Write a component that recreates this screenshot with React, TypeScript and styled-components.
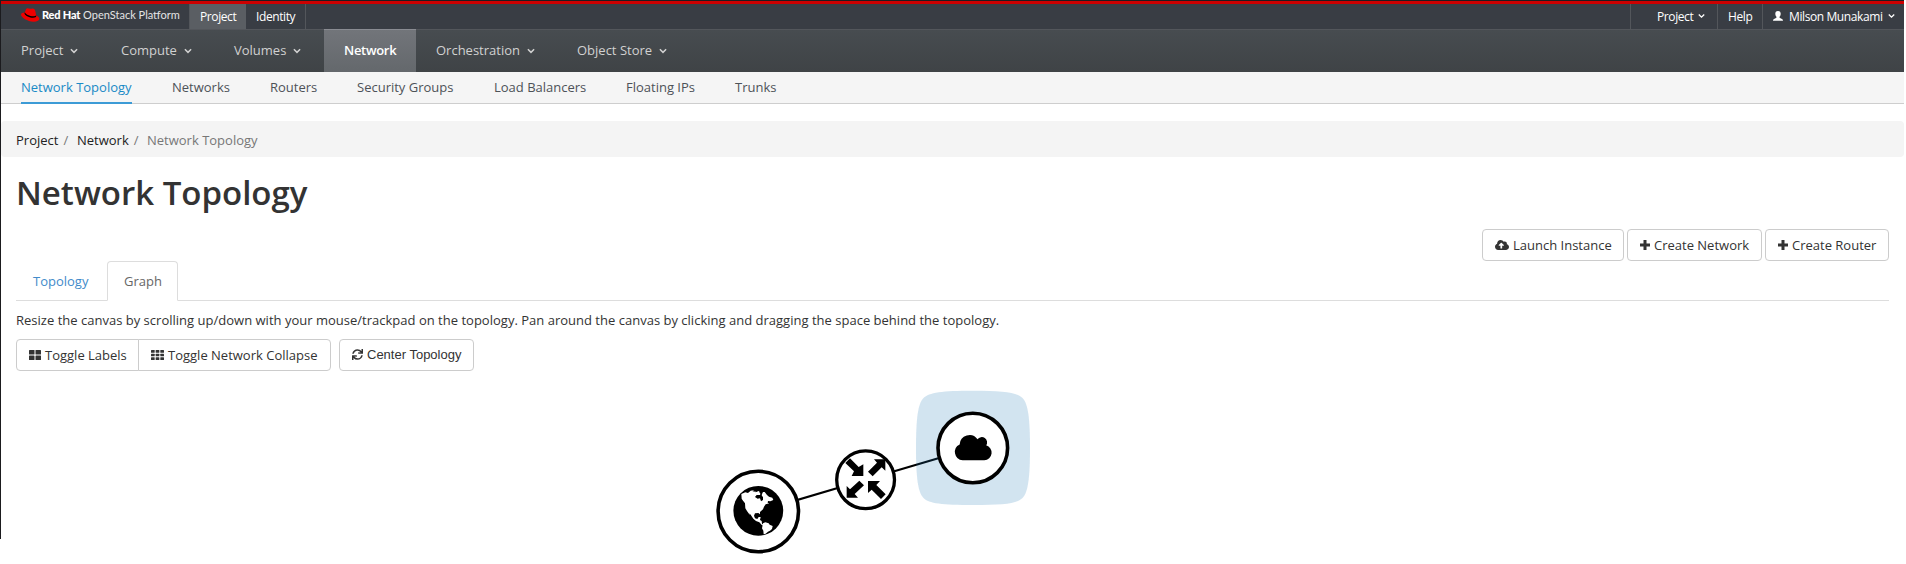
import React from 'react';
import styled, { createGlobalStyle, css } from 'styled-components';
import { FaCloudUploadAlt, FaSync } from 'react-icons/fa';

const Global = createGlobalStyle`
  * { box-sizing: border-box; }
  html { background: #fff; overflow: hidden; }
  body { margin: 0; font: 13px/20px "Open Sans", "Noto Sans", sans-serif; color: #333; }
`;

const Page = styled.div`
  width: 1904px;
  height: 564px;
  overflow: hidden;
  background: linear-gradient(#1b1b1e, #1b1b1e) 0 0 / 1px 539px no-repeat, #fff;
  padding-left: 1px;
`;

const Masthead = styled.header`
  height: 29px;
  border-top: 1px solid #1d1d1f;
  box-shadow: inset 0 3px 0 #c00;
  background: #393d44;
  padding-top: 3px;
  display: flex;
  color: #fff;
  font-size: 12px;
  letter-spacing: -0.4px;
  line-height: 25px;
`;

const Brand = styled.div`
  width: 188px;
  height: 25px;
  padding-left: 20px;
  display: flex;
  white-space: nowrap;
  svg { flex: none; margin-top: 4px; }
`;

const BrandName = styled.span`
  font: 400 11px/22px Lato, sans-serif;
  letter-spacing: 0;
  color: #e4e4e4;
  margin-left: 2px;
  b { font-weight: 900; color: #fff; letter-spacing: -0.2px; }
`;

const MastItem = styled.div<{ $w: number; $active?: boolean; $pad?: number; $left?: boolean }>`
  width: ${p => p.$w}px;
  padding-left: ${p => p.$pad ?? 10}px;
  display: flex;
  white-space: nowrap;
  border-right: ${p => (p.$left ? 0 : 1)}px solid #53565b;
  border-left: ${p => (p.$left ? 1 : 0)}px solid #53565b;
  background: ${p => (p.$active ? '#5a5e63' : 'transparent')};
`;

const Spacer = styled.div`flex: 1;`;

const PrimaryNav = styled.nav`
  height: 43px;
  border-top: 1px solid #53565b;
  background: linear-gradient(#474c50, #3f4346);
  display: flex;
`;

const PrimaryItem = styled.div<{ $w: number; $active?: boolean }>`
  width: ${p => p.$w}px;
  height: 43px;
  margin-top: -1px;
  padding: 1px 0 0 20px;
  line-height: 41px;
  display: flex;
  white-space: nowrap;
  color: #d1d1d1;
  ${p => p.$active && css`
    color: #fff;
    font-weight: 600;
    letter-spacing: -0.3px;
    border-top: 1px solid #8a8c92;
    padding-top: 0;
    background: linear-gradient(#72757a, #64686c);
  `}
`;

const SubNav = styled.nav`
  height: 32px;
  background: #f5f5f5;
  border-bottom: 1px solid #cecece;
  padding-left: 20px;
  display: flex;
  gap: 40px;
`;

const SubItem = styled.div<{ $active?: boolean; $w: number }>`
  width: ${p => p.$w}px;
  height: 32px;
  white-space: nowrap;
  line-height: 31px;
  color: ${p => (p.$active ? '#1a8ac6' : '#4d5258')};
  border-bottom: ${p => (p.$active ? '2px solid #3c9bd6' : '0')};
`;

const Crumbs = styled.div`
  margin-top: 17px;
  height: 36px;
  padding-left: 15px;
  border-radius: 4px;
  background: #f4f4f4;
  line-height: 39px;
  white-space: pre;
  display: flex;
`;

const Crumb = styled.span<{ $w?: number; $muted?: boolean }>`
  width: ${p => (p.$w ? p.$w + 'px' : 'auto')};
  color: ${p => (p.$muted ? '#777' : '#222')};
  i { font-style: normal; color: #777; margin-left: 5px; }
`;

const Content = styled.main`padding: 0 15px 0 15px;`;

const Title = styled.h1`
  margin: 15px 0 0;
  height: 57px;
  font-size: 33px;
  line-height: 42px;
  font-weight: 600;
  color: #333;
`;

const Row = styled.div<{ $end?: boolean; $gap?: number }>`
  display: flex;
  justify-content: ${p => (p.$end ? 'flex-end' : 'flex-start')};
  gap: ${p => p.$gap ?? 0}px;
`;

const Button = styled.button<{ $w: number; $side?: 'left' | 'right'; $plain?: boolean }>`
  width: ${p => p.$w}px;
  height: 32px;
  padding: 0 0 ${p => (p.$plain ? 2 : 0)}px 12px;
  display: flex;
  align-items: center;
  gap: 4px;
  border: 1px solid #ccc;
  border-radius: ${p => (p.$side === 'left' ? '4px 0 0 4px' : p.$side === 'right' ? '0 4px 4px 0' : '4px')};
  margin-left: ${p => (p.$side === 'right' ? -1 : 0)}px;
  background: #fff;
  color: #333;
  white-space: nowrap;
  font: ${p => (p.$plain ? '13px "Liberation Sans"' : '13px "Open Sans"')}, sans-serif;
  svg { flex: none; margin-top: ${p => (p.$plain ? 0 : -1)}px; }
`;

const Tabs = styled.div`
  height: 40px;
  border-bottom: 1px solid #ddd;
  display: flex;
`;

const Tab = styled.div<{ $w: number; $active?: boolean }>`
  width: ${p => p.$w}px;
  height: 40px;
  padding-left: 17px;
  line-height: 40px;
  color: #428bca;
  ${p => p.$active && css`
    padding-left: 16px;
    color: #666;
    border: 1px solid #ddd;
    border-bottom-color: #fff;
    border-radius: 4px 4px 0 0;
    line-height: 38px;
  `}
`;

const Hint = styled.p`margin: 9px 0 8px; height: 21px; line-height: 21px; letter-spacing: 0.01px; white-space: nowrap;`;

const Graph = styled.svg`display: block; margin: 9px 0 0 684px;`;

const Chevron = ({ w = 8, x = 7, y = 18 }) => (
  <svg width={w} height={6} viewBox="0 0 9 6" style={{ marginLeft: x, marginTop: y }}>
    <path d="M1 1l3.500 3.500L8 1" fill="none" stroke="currentColor" strokeWidth="1.700" />
  </svg>
);

const HatLogo = () => (
  <svg width="19" height="14" viewBox="0 0 19 14">
    <path fill="#e00" d="M3.700 4.600C1.500 4.700 0 5.300 0 6.600 0 9.500 6.500 13.700 12.500 13.700c3.800 0 5.800-1.400 5.800-3 0-1.200-1.100-2.400-3.100-3.300l-.8-3.800C14 2 13.600.9 12 .5c-1-.3-1.600.3-2.600.3C8.400.8 7.800.3 6.800.2 6 .1 5.400.4 5 1.300z" />
    <path fill="#000" d="M3.800 4.300l-.3 1.400C4.500 7.700 8.500 9.700 12 9.700c2.200 0 3.600-.7 3.200-2.500-.5.800-1.700 1.100-2.900 1.100C8.500 8.300 4.700 6.300 3.800 4.300z" />
  </svg>
);

const UserIcon = () => (
  <svg width="10" height="10" viewBox="0 0 10 10" style={{ margin: '7px 6px 0 0' }}>
    <path fill="#fff" d="M5 0c2 0 2.700 1.200 2.700 2.800C7.700 4.300 7 5.300 6.500 5.900c0 .7.200 1 1 1.300C9 7.700 10 8.300 10 9.700H0C0 8.300 1 7.700 2.500 7.200c.8-.3 1-.6 1-1.300C3 5.300 2.300 4.300 2.300 2.800 2.300 1.200 3 0 5 0z" />
  </svg>
);

const PlusIcon = () => (
  <svg width="10" height="10" viewBox="0 0 10 10">
    <path fill="#333" d="M3.500 0h3v3.500H10v3H6.500V10h-3V6.500H0v-3h3.500z" />
  </svg>
);

const GridIcon = ({ cols, rows, w }: { cols: number; rows: number; w: number }) => {
  const gap = 1;
  const cw = (w - gap * (cols - 1)) / cols;
  const ch = (10 - gap * (rows - 1)) / rows;
  return (
    <svg width={w} height="10" viewBox={`0 0 ${w} 10`}>
      {Array.from({ length: cols * rows }, (_, i) => (
        <rect key={i} x={(i % cols) * (cw + gap)} y={Math.floor(i / cols) * (ch + gap)} width={cw} height={ch} rx="0.5" fill="#333" />
      ))}
    </svg>
  );
};

const TopologyGraph = () => (
  <Graph width="350" height="184" viewBox="0 0 350 184">
    <path d="M58.500 131.500L165.500 99.800 273 68" fill="none" stroke="#000" strokeWidth="2.200" />
    <path
      d="M273 10.700C304 10.700 317 12.500 322.500 18S330 38 330 68s-2 44.500-7.500 50-18.500 7-49.500 7-44-1.500-49.500-7S216 98 216 68s2-44.500 7.500-50S242 10.700 273 10.700z"
      fill="#1f77b4"
      fillOpacity="0.2"
    />
    <circle cx="58.300" cy="131.500" r="40.200" fill="#fff" stroke="#000" strokeWidth="3.600" />
    <circle cx="165.600" cy="99.800" r="28.900" fill="#fff" stroke="#000" strokeWidth="3.300" />
    <circle cx="272.800" cy="68" r="34.800" fill="#fff" stroke="#000" strokeWidth="3.600" />
    <circle cx="58.300" cy="130.800" r="24.900" />
    <g transform="scale(.33333)">
      <path
        fill="#fff"
        d="M124 342l12-5 8 2 8-7 12-2 3 7 9-4 6 6-2 6-10 0-5 6 8 5 7-1 3 9 6-4 0-8-4-6 3-10 6 0 7 9 6 5 10 3 3 7-9 4-7-1-1 5 5 2-11 3-5 7-3 8-9 8 0 7-5-4-10 1-3 7 3 8 7 2 4-6 6 0-2 9 5 3 1 8 6 5-6 0-8-9-10-4-8-7-8-12-4-4 2 6-9-13-5-8-1-15-7-9-3-5z"
      />
      <path fill="#fff" d="M189 430l7-3 10 3 3 4 9 4-2 9-6 5-6 3-7 6-6 2-1-11-4-7z" />
      <path d="M157 333l8-4 3 3-5 3zM178 336l8-2 2 5-7 2z" />
      <path d="M450 235L436 249 462 274 455 288H490V253L476 261zM556 238H522L531 248 504 275 518 289 545 262 556 272zM440 353V318L450 328 478 302 492 316 464 342 474 353zM504 303H540L529 315 557 343 543 357 515 329 504 339z" />
      <path d="M788 241a25 25 0 0 1-9-47.500 29.500 29.500 0 0 1 53.500-15.500 15.500 15.500 0 0 1 26 18A23 23 0 0 1 853 241z" />
    </g>
  </Graph>
);

const primary: [string, number, boolean?][] = [
  ['Project', 100], ['Compute', 113], ['Volumes', 110], ['Network', 92, true], ['Orchestration', 141], ['Object Store', 140],
];
const secondary: [string, number, boolean?][] = [
  ['Network Topology', 111, true], ['Networks', 58], ['Routers', 47], ['Security Groups', 97], ['Load Balancers', 92], ['Floating IPs', 69], ['Trunks', 42],
];

export default function App() {
  return (
    <>
      <Global />
      <Page>
        <Masthead>
          <Brand>
            <HatLogo />
            <BrandName><b>Red Hat</b> OpenStack Platform</BrandName>
          </Brand>
          <MastItem $w={57} $active $left>Project</MastItem>
          <MastItem $w={60}>Identity</MastItem>
          <Spacer />
          <MastItem $w={87} $left $pad={26}>Project<Chevron w={7} x={5} y={9} /></MastItem>
          <MastItem $w={45} $left>Help</MastItem>
          <MastItem $w={142} $left>
            <UserIcon />
            Milson Munakami<Chevron w={7} x={5} y={9} />
          </MastItem>
        </Masthead>
        <PrimaryNav>
          {primary.map(([t, w, a]) => (
            <PrimaryItem key={t} $w={w} $active={a}>{t}{!a && <Chevron />}</PrimaryItem>
          ))}
        </PrimaryNav>
        <SubNav>
          {secondary.map(([t, w, a]) => <SubItem key={t} $w={w} $active={a}>{t}</SubItem>)}
        </SubNav>
        <Crumbs>
          <Crumb $w={61}>Project<i>/</i></Crumb>
          <Crumb $w={70}>Network<i>/</i></Crumb>
          <Crumb $muted>Network Topology</Crumb>
        </Crumbs>
        <Content>
          <Title>Network Topology</Title>
          <Row $end $gap={3}>
            <Button $w={142}><FaCloudUploadAlt size={14} />Launch Instance</Button>
            <Button $w={135}><PlusIcon />Create Network</Button>
            <Button $w={124}><PlusIcon />Create Router</Button>
          </Row>
          <Tabs>
            <Tab $w={91}>Topology</Tab>
            <Tab $w={71} $active>Graph</Tab>
          </Tabs>
          <Hint>Resize the canvas by scrolling up/down with your mouse/trackpad on the topology. Pan around the canvas by clicking and dragging the space behind the topology.</Hint>
          <Row $gap={8}>
            <Row>
              <Button $w={123} $side="left"><GridIcon cols={2} rows={2} w={12} />Toggle Labels</Button>
              <Button $w={193} $side="right"><GridIcon cols={3} rows={3} w={13} />Toggle Network Collapse</Button>
            </Row>
            <Button $w={135} $plain><FaSync size={11} />Center Topology</Button>
          </Row>
          <TopologyGraph />
        </Content>
      </Page>
    </>
  );
}
